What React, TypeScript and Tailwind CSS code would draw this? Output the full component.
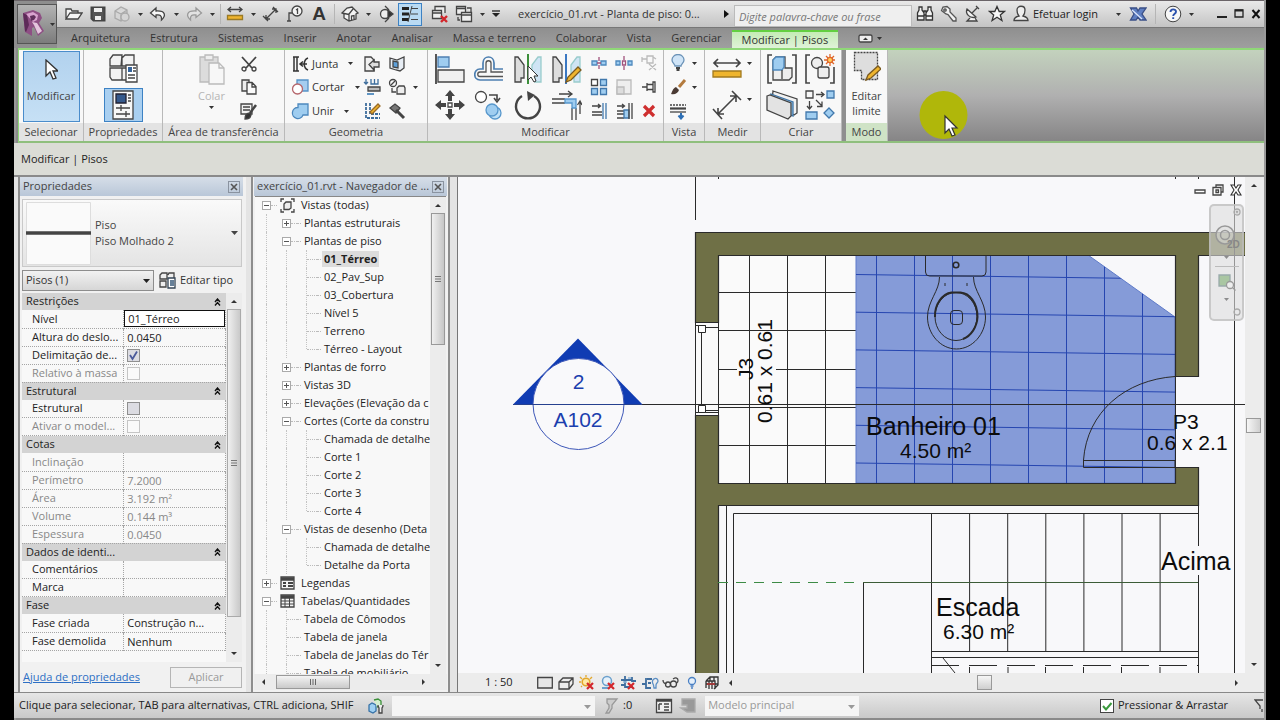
import React, { useState } from "react";

type Kids = { children?: React.ReactNode };

function Svg({ w = 18, h = 18, children }: Kids & { w?: number; h?: number }) {
  return (
    <svg width={w} height={h} viewBox={`0 0 ${w} ${h}`} fill="none" stroke="#444" strokeWidth="1.3" className="shrink-0" aria-hidden="true">
      {children}
    </svg>
  );
}

function Caret() {
  return (
    <svg width="5" height="3" viewBox="0 0 5 3" className="shrink-0" aria-hidden="true">
      <path d="M0 0h5L2.500 3z" fill="#333" />
    </svg>
  );
}

function CaretButton({ label }: { label: string }) {
  return (
    <button aria-label={label} className="flex h-6 w-3 shrink-0 items-center justify-center">
      <Caret />
    </button>
  );
}

function Tool({ label, active, children }: Kids & { label: string; active?: boolean }) {
  return (
    <button
      aria-label={label}
      className={
        active
          ? "flex h-[23px] w-6 shrink-0 items-center justify-center border border-[#3d82c4] bg-[#b9daf3]"
          : "flex h-6 w-6 shrink-0 items-center justify-center"
      }
    >
      {children}
    </button>
  );
}

function Cell({ label, children }: Kids & { label: string }) {
  return (
    <button aria-label={label} className="flex items-center justify-center">
      {children}
    </button>
  );
}

/* ---------- title bar ---------- */

function QuickAccess() {
  return (
    <div className="flex shrink-0 items-center pl-[5px]">
      <Tool label="Abrir">
        <Svg><path d="M1 14V4h5l1 2h6v2M1 14l4-6h12l-4 6z" fill="#f4f4f4" /></Svg>
      </Tool>
      <Tool label="Salvar">
        <Svg><path d="M2.500 2.500h13v13h-11l-2-2z" fill="#555" strokeWidth="2" /><path d="M5 3h8v4H5zM6 11h6v4H6z" fill="#eee" stroke="none" /></Svg>
      </Tool>
      <Tool label="Sincronizar">
        <Svg><g stroke="#aaa" fill="#d5d5d5"><path d="M2 6l6-4 6 3v8l-6 3-6-3zM2 6l6 3 6-4M8 9v7" /><circle cx="12" cy="12" r="4" /></g></Svg>
      </Tool>
      <CaretButton label="Opções de sincronização" />
      <Tool label="Desfazer">
        <Svg><path d="M7 3L1.500 8 7 12.500V10c4-.5 6 0 5.500 5C17 11 17 5.500 7 6z" fill="#f7f7f7" stroke="#444" /></Svg>
      </Tool>
      <CaretButton label="Histórico de desfazer" />
      <Tool label="Refazer">
        <Svg><path d="M11 3l5.500 5L11 12.500V10c-4-.5-6 0-5.500 5C1 11 1 5.500 11 6z" fill="#e2e2e2" stroke="#999" /></Svg>
      </Tool>
      <CaretButton label="Histórico de refazer" />
      <span className="mx-[2px] h-5 w-px bg-[#b5b5b5]" />
      <Tool label="Medir">
        <Svg><path d="M2 4.500h14M5 2L2 4.500 5 7M13 2l3 2.500L13 7" /><path d="M1.500 10.500h15v4h-15z" fill="#efb52e" stroke="#9a7a25" /></Svg>
      </Tool>
      <CaretButton label="Opções de medida" />
      <Tool label="Cota alinhada">
        <Svg><path d="M4 14L14 4M1 11l5 5M11 2l5 5M4 10v4h4M10 4h4v4" /></Svg>
      </Tool>
      <Tool label="Identificar por categoria">
        <Svg><circle cx="11" cy="6" r="5" fill="#f5f5f5" /><path d="M10 5l1.500-1v5M6 8H3v8M1 16h4" /></Svg>
      </Tool>
      <Tool label="Texto">
        <span className="font-['Liberation_Sans',sans-serif] text-[19px] leading-5 font-bold text-[#333]">A</span>
      </Tool>
      <span className="mx-[3px] h-5 w-px bg-[#b5b5b5]" />
      <Tool label="Vista 3D padrão">
        <Svg><path d="M1 8l5-5 5-1 6 6-2 1v5l-7 2-5-3V9zM8 16V9l4-5M1 8l7 1.500M10.500 15v-4l2.500-.5v4" fill="#f3f3f3" /></Svg>
      </Tool>
      <CaretButton label="Opções de vista 3D" />
      <Tool label="Corte">
        <Svg><circle cx="8" cy="9" r="4.500" fill="#eee" /><path d="M8 1l4 4M8 17l4-4" /><path d="M11 5l5 4-5 4z" fill="#333" /></Svg>
      </Tool>
      <Tool label="Linhas finas" active>
        <Svg><path d="M1 3.500h7M1 9h7M1 14.500h7" strokeWidth="3" stroke="#222" /><path d="M10 3.500h7M10 9h7M10 14.500h7M11 1L7 17" strokeWidth="1" /></Svg>
      </Tool>
      <span className="w-[6px]" />
      <Tool label="Fechar janelas ocultas">
        <Svg><path d="M4 5V1.500h10V8M1.500 5.500h9v8h-9zM2 8h8" fill="#eee" /><path d="M10 11l6 6M16 11l-6 6" stroke="#d3262b" strokeWidth="2.400" /></Svg>
      </Tool>
      <Tool label="Alternar janelas">
        <Svg><path d="M1.500 1.500h9v8h-9zM1.500 3.500h9M12 3h4v4" fill="#eee" /><path d="M6.500 7.500h10v9h-10zM6.500 10h10" fill="#eee" /><path d="M3 12v3h2" /></Svg>
      </Tool>
      <CaretButton label="Lista de janelas" />
      <button aria-label="Personalizar barra" className="flex h-6 w-4 items-center justify-center">
        <Svg w={8} h={8}><path d="M0 1h8" stroke="#222" /><path d="M0 3h8L4 7z" fill="#222" stroke="none" /></Svg>
      </button>
    </div>
  );
}

function TitleBar() {
  return (
    <div className="flex h-7 items-center border-t border-t-[#6a6468] border-b border-b-[#777] bg-linear-to-b from-[#e9e9e9] to-[#c4c4c4]">
      <QuickAccess />
      <h1 className="ml-[14px] w-[200px] shrink truncate text-[11px] text-[#333]">exercício_01.rvt - Planta de piso: 0...</h1>
      <button aria-label="Expandir pesquisa" className="flex h-6 w-4 shrink-0 items-center justify-center">
        <Svg w={5} h={8}><path d="M0 0l5 4-5 4z" fill="#111" stroke="none" /></Svg>
      </button>
      <input
        aria-label="Pesquisa"
        placeholder="Digite palavra-chave ou frase"
        className="mt-1 h-[22px] w-[178px] shrink-0 border border-[#bbb] bg-[#efefef] px-1 text-[11px] italic text-[#444] placeholder:text-[#777]"
      />
      <div className="flex min-w-0 flex-1 items-center pl-px">
        <Tool label="Pesquisar">
          <Svg><g fill="#f2f2f2" stroke="#333"><path d="M3 2h3v3l2 3v7H1.500V8L3 5zM12 2h3v3l1.500 3v7H10V8l2-3zM8 6h2v4H8zM1.500 11H8M10 11h6.500" /></g></Svg>
        </Tool>
        <Tool label="Assinatura">
          <Svg><path d="M6 9L1.500 5.500 3 2l4-.5 3 2.500v3l6 6v3h-3L8 9.500z" fill="#f2f2f2" stroke="#555" /><circle cx="5" cy="5" r="1.200" /></Svg>
        </Tool>
        <Tool label="Comunicação">
          <Svg><path d="M3 4c-2 5 3 10 9 8zM3 4l9 8M8 8l5-5M12 1l3 3M6 13l-3 3h10l-2-3" fill="#f2f2f2" stroke="#444" /></Svg>
        </Tool>
        <Tool label="Favoritos">
          <Svg><path d="M9 1.500l2.200 5h5.300l-4.200 3.500 1.600 5.500L9 12.300 4.100 15.500 5.700 10 1.500 6.500h5.300z" fill="#f7f7f7" stroke="#333" /></Svg>
        </Tool>
        <button className="flex h-6 shrink-0 items-center gap-[3px] pl-[3px] text-[11px] text-[#222]">
          <Svg><path d="M5 5c0-5 8-5 8 0 0 4-1 5-2 6 4 1 5 2 5 4.500H2C2 13 3 12 7 11 6 10 5 9 5 5z" fill="#eee" /></Svg>
          Efetuar login
        </button>
        <div className="ml-auto flex shrink-0 items-center">
          <CaretButton label="Opções de login" />
          <span className="w-[2px]" />
          <Tool label="Exchange Apps">
            <Svg><path d="M1.500 3h6L9 6l2-3h6l-4 6 4 6h-6L9 12l-2 3H1.500L5 9z" fill="#5f7fc2" stroke="#3a4f86" /><path d="M3 5l10 9" stroke="#dce6fa" /></Svg>
          </Tool>
          <span className="mx-[5px] h-5 w-px bg-[#b5b5b5]" />
          <Tool label="Ajuda">
            <svg width="18" height="18" viewBox="0 0 18 18" aria-hidden="true">
              <circle cx="9" cy="9" r="7.800" fill="#f7f7f7" stroke="#444" />
              <path d="M6.500 7c0-3.500 5.500-3.300 5.500-.3 0 2-2.800 2-2.800 4.300M9.200 12.200v1.800" fill="none" stroke="#2b51ae" strokeWidth="1.900" />
            </svg>
          </Tool>
          <CaretButton label="Opções de ajuda" />
          <span className="w-4" />
          <button aria-label="Minimizar" className="flex h-6 w-[17px] items-center justify-center"><Svg w={10} h={10}><path d="M0 8h10" stroke="#222" strokeWidth="2" /></Svg></button>
          <button aria-label="Maximizar" className="flex h-6 w-[17px] items-center justify-center"><Svg w={10} h={10}><path d="M1 1h8v7H1z" stroke="#222" /><path d="M1 1.500h8" stroke="#222" strokeWidth="2" /></Svg></button>
          <button aria-label="Fechar" className="flex h-6 w-[17px] items-center justify-center"><Svg w={10} h={10}><path d="M1.500 1l7 8M8.500 1l-7 8" stroke="#111" strokeWidth="2" /></Svg></button>
        </div>
      </div>
    </div>
  );
}

const TABS = ["Arquitetura", "Estrutura", "Sistemas", "Inserir", "Anotar", "Analisar", "Massa e terreno", "Colaborar", "Vista", "Gerenciar"];

function Header() {
  return (
    <header className="flex bg-[#9a9a9a]">
      <div className="flex w-[43px] shrink-0 flex-col border-t border-t-[#6a6468] bg-[#8e8e8e] pt-[3px] pl-[3px]">
        <button aria-label="Menu do aplicativo" className="flex h-10 w-10 items-center gap-1 border border-[#555] bg-linear-to-b from-[#b4b4b4] to-[#7c7c7c] pl-1">
          <Svg w={24} h={32}>
            <g stroke="none">
              <path d="M1 5l10-3 7 3 2 5-3 5 5 8-6 5-4-9-2 1v8l-7-4z" fill="#8e4f84" />
              <path d="M4 6l7-2 5 3-1 5-4 2z" fill="#d9a3cf" />
              <path d="M1 5l4 2 2 10-3 7-1-1z" fill="#5d2a58" />
              <path d="M10 14l5 1 5 8-4 3-4-9z" fill="#e4c5dd" />
              <path d="M8 8l4-1 2 2-2 3-3 1z" fill="#61305c" />
            </g>
          </Svg>
          <Caret />
        </button>
      </div>
      <div className="min-w-0 flex-1">
        <TitleBar />
        <nav className="flex h-5 items-end bg-linear-to-b from-[#8f8f8f] to-[#9f9f9f] pl-1 text-[11px] text-[#333]">
          {TABS.map((t) => (
            <a key={t} href="#" className="flex h-5 items-center px-[10px] whitespace-nowrap">{t}</a>
          ))}
          <a href="#" aria-current="page" className="flex h-[18px] items-center border-t-2 border-[#63cf41] bg-linear-to-b from-[#c4ecb5] to-[#e0f2d8] px-[10px] whitespace-nowrap">
            Modificar | Pisos
          </a>
          <button aria-label="Minimizar faixa de opções" className="ml-5 flex h-5 items-center gap-1">
            <Svg w={15} h={9}><rect x="1" y="1" width="13" height="7" rx="1.500" fill="#eee" /><path d="M5 6h5L7.500 3.500z" fill="#333" stroke="none" /></Svg>
            <Caret />
          </button>
        </nav>
      </div>
    </header>
  );
}

/* ---------- ribbon ---------- */

function Panel({ title, size, green, children }: Kids & { title: string; size: string; green?: boolean }) {
  return (
    <section className={`flex shrink-0 flex-col border-r border-r-[#b9b9b9] bg-[#f8f8f8] ${size}`}>
      <div className="flex h-[73px] justify-center">{children}</div>
      <h2 className={`h-[18px] truncate text-center text-[11px] leading-[18px] text-[#444] ${green ? "bg-[#cfe3c6]" : "bg-[#e3e3e3]"}`}>{title}</h2>
    </section>
  );
}

function GeoRow({ label, children }: Kids & { label: string }) {
  return (
    <button className="flex items-center gap-[3px] text-[11px] text-[#333]">
      {children}
      {label}
      <span className="w-1" />
      <Caret />
    </button>
  );
}

const BLUE = "#9fcdf0";

function Ribbon() {
  return (
    <div className="ml-[4px] flex h-[95px] border-y-2 border-t-[#8fd877] border-b-[#8fbf7d] border-l border-l-[#8fd877] bg-linear-to-b from-[#c3d2bd] via-[#b0b0b0] to-[#868586]">
      <Panel title="Selecionar" size="w-[65px]">
        <button className="mt-px flex h-[71px] w-[57px] flex-col items-center gap-[7px] border border-[#4a8ccb] bg-linear-to-b from-[#b2d2ee] to-[#c6e0f5] pt-[7px] text-[11px] text-[#444]">
          <Svg w={14} h={22}><path d="M2 1v16l4-4 3 7 3-1-3-7h5z" fill="#fff" stroke="#333" /></Svg>
          Modificar
        </button>
      </Panel>
      <Panel title="Propriedades" size="w-[79px]">
        <div className="flex flex-col items-center gap-1 pt-[3px]">
          <Cell label="Propriedades de tipo">
            <Svg w={30} h={31}>
              <path d="M2 6l3-4h9l-1 11H2zM14 5l3-3h9v11H14zM2 15h12v12H4l-2-3zM14 15h5v12h-5" fill="#f2f2f2" />
              <path d="M18 12h11v17H18z" fill="#fff" /><path d="M20 14h4v5h-4z" fill="#35649b" stroke="none" /><path d="M25 15h3M25 18h3M20 22h7M20 25h7" />
            </Svg>
          </Cell>
          <button aria-label="Propriedades" className="flex h-[34px] w-[39px] items-center justify-center border border-[#3d82c4] bg-[#a9cff0]">
            <Svg w={22} h={30}>
              <path d="M1 1h20v28H1z" fill="#f7f7f7" /><path d="M4 4h10v9H4z" fill="#35598c" stroke="#223" /><path d="M16 5h3M16 8h3M16 11h3M4 18h14M9 15v6M4 24h14M14 21v6" />
            </Svg>
          </button>
        </div>
      </Panel>
      <Panel title="Área de transferência" size="w-[122px]">
        <div className="flex w-full">
          <button className="flex w-[73px] flex-col items-center pl-6 pt-[3px] text-[11px] leading-4 text-[#b5b5b5]">
            <Svg w={26} h={32}>
              <g stroke="#bbb"><path d="M1 4h18v25H1z" fill="#dcdcdc" /><path d="M6 2h8v5H6z" fill="#eee" /><path d="M10 10h10l5 5v16H10z" fill="#f7f7f7" /><path d="M20 10v5h5" /></g>
            </Svg>
            <span className="pt-[3px]">Colar</span>
            <span className="pt-[2px]"><Caret /></span>
          </button>
          <div className="grid flex-1 grid-rows-3 pt-[2px] pr-[23px]">
            <Cell label="Recortar"><Svg><path d="M2 2l10 11M16 2L6 13" strokeWidth="1.800" /><circle cx="4" cy="14" r="2" /><circle cx="14" cy="14" r="2" /></Svg></Cell>
            <Cell label="Copiar"><Svg><path d="M2 2h7v11H2z" fill="#eee" /><path d="M7 4.500h5l4 4V16H7zM12 5v4h4" fill="#fafafa" /></Svg></Cell>
            <Cell label="Corresponder propriedades"><Svg><path d="M1 2h11v10H1z" fill="#f2f2f2" /><path d="M3 5h7M3 8h7" /><path d="M16 3l-6 8" strokeWidth="2.500" /><path d="M5 17c0-5 3-6 5-6l1 2c-1 4-3 4-6 4z" fill="#333" /></Svg></Cell>
          </div>
        </div>
      </Panel>
      <Panel title="Geometria" size="w-[143px]">
        <div className="grid flex-1 grid-rows-3 justify-items-start pt-[2px] pl-[6px]">
          <GeoRow label="Junta"><Svg><path d="M2 2h6M2 16h6M3 2v14M6 2c0 5 0 9 0 14M17 3c-5 2-5 10 0 12M9 9h7M12 6.500L9 9l3 2.500" stroke="#333" strokeWidth="1.500" /></Svg></GeoRow>
          <GeoRow label="Cortar"><Svg><path d="M6 2h11v11H6z" fill="#a5cdf0" stroke="#5792c6" /><circle cx="6.500" cy="11" r="5" fill="#fff" stroke="#b5656b" /></Svg></GeoRow>
          <GeoRow label="Unir"><Svg><path d="M7 2h10v11h-5a5.500 5.500 0 1 1-5-7.500z" fill={BLUE} stroke="#4d88bd" /></Svg></GeoRow>
        </div>
        <div className="grid w-[69px] grid-cols-[25px_25px_12px] grid-rows-3 pt-[2px]">
          <Cell label="Encaixe"><Svg><path d="M2 2h6l3 3v11H2z" fill="#f0f0f0" /><path d="M16 7v5h-5v3L6 9.500 11 5v2z" fill="#ddd" /></Svg></Cell>
          <Cell label="Dividir face"><Svg><path d="M2 3l7 2 7-3v11l-4 3-4-1-6-2z" fill="#e7edf4" /><path d="M5 6l5 1v6l-5-1z" fill="#5da0da" /></Svg></Cell>
          <span />
          <Cell label="Juntar vigas"><Svg><path d="M3 1v5M1 4l2 2 2-2M8 1v5h7V1M11.500 1v5" stroke="#3d6d9c" /><path d="M5 9h12v4H5z" fill="#bbb" /><path d="M4 16h7" stroke="#4d88bd" strokeWidth="1.800" /></Svg></Cell>
          <Cell label="Pintar"><Svg><circle cx="5" cy="5" r="3.500" /><path d="M3 7l4-4M4 10v4h4M11 8h5l1 2v6h-8v-6z" fill="#eee" /></Svg></Cell>
          <CaretButton label="Opções de pintura" />
          <Cell label="Junções de parede"><Svg><path d="M3 1v15h14M7 1v11h10" stroke="#3d6d9c" strokeDasharray="3 1" strokeWidth="1.800" /><path d="M7 10L15 2l2 2-8 8z" fill="#efb52e" stroke="#9a6a25" /></Svg></Cell>
          <Cell label="Demolir"><Svg><path d="M2 6l5-4 5 4-4 5z" fill="#777" /><path d="M8 8l8 8" strokeWidth="3" /></Svg></Cell>
          <span />
        </div>
      </Panel>
      <Panel title="Modificar" size="w-[236px]">
        <div className="grid grid-cols-[39px_39px_39px_39px] grid-rows-[36px_36px] pt-px">
          <Cell label="Alinhar"><Svg w={30} h={30}><path d="M1 0v30" stroke="#444" strokeWidth="1.800" /><path d="M3 3h11v10H3z" fill={BLUE} stroke="#4d7fb1" /><path d="M3 16h26v12H3z" fill="#f0f0f0" /></Svg></Cell>
          <Cell label="Deslocamento"><Svg w={30} h={30}><path d="M29 15h-9V9c0-8-11-8-11 0v6H6c-7 0-7 11 0 11h23" stroke="#4d7fb1" strokeWidth="1.700" /><path d="M29 18H17V9c0-3-5-3-5 0v9H6c-3 0-3 4.500 0 4.500h23" stroke="#555" /></Svg></Cell>
          <Cell label="Espelhar - Selecionar eixo"><Svg w={30} h={30}><path d="M2 3h3l6 8v13H8v4H2z" fill="#ddd" /><path d="M28 3h-3l-6 8v13h3v4h6z" fill="#cfe4f4" stroke="#9cc" /><path d="M15 0v30" stroke="#3c8f3b" strokeWidth="2" /><path d="M15 12v14l3-3 3 5 2-1-2-5h4z" fill="#fff" stroke="#333" strokeWidth="1" /></Svg></Cell>
          <Cell label="Espelhar - Desenhar eixo"><Svg w={30} h={30}><path d="M1 3h3l6 8v13H7v4H1z" fill="#ddd" /><path d="M28 3h-3l-6 8v13h3v4h6z" fill="#cfe4f4" stroke="#9cc" /><path d="M14 0v30" stroke="#3b78c2" strokeWidth="2" /><path d="M14 28l2-5L26 13l3 3-10 10z" fill="#efb52e" stroke="#7a5a20" /></Svg></Cell>
          <Cell label="Mover"><Svg w={30} h={30}><path d="M15 0l5 6h-3v5h-4V6h-3zM15 30l5-6h-3v-5h-4v5h-3zM0 15l6-5v3h5v4H6v3zM30 15l-6-5v3h-5v4h5v3z" fill="#444" stroke="none" /><path d="M13 13h4v4h-4z" fill="#fff" /></Svg></Cell>
          <Cell label="Copiar elementos"><Svg w={30} h={30}><circle cx="7" cy="7" r="5.500" fill="#fff" /><circle cx="21" cy="23" r="6" fill="#bfe0f7" stroke="#5797cc" /><circle cx="18" cy="20" r="6" fill={BLUE} stroke="#5797cc" /><path d="M15 5h8v5M20 8l3 4 3-4" strokeWidth="1.600" /></Svg></Cell>
          <Cell label="Rotacionar"><Svg w={30} h={30}><path d="M9 6a12 12 0 1 0 12 0" strokeWidth="2.400" /><path d="M14 1l8 4-7 6z" fill="#444" stroke="none" /></Svg></Cell>
          <Cell label="Aparar/Estender canto"><Svg w={30} h={30}><path d="M0 9h13M0 13h13M20 18v12M24 18v12" /><path d="M13 9h11v9h-4v-5h-7z" fill={BLUE} stroke="#5797cc" /><path d="M7 4h12M16 1l4 3-4 3M28 24V12M25.500 15L28 11l2 4" /></Svg></Cell>
        </div>
        <div className="grid grid-cols-[25px_25px_25px] grid-rows-[24px_24px_24px] pt-px">
          <Cell label="Dividir elemento"><Svg><path d="M2 7h5v4H2zM11 7h5v4h-5z" fill={BLUE} stroke="#4d88bd" /><path d="M9 3v4M9 11v4M7 9h4" stroke="#a0527c" /></Svg></Cell>
          <Cell label="Dividir com folga"><Svg><path d="M1 7h4v4H1zM13 7h4v4h-4z" fill={BLUE} stroke="#4d88bd" /><path d="M7.500 7h3v4h-3z" stroke="#a0527c" /><path d="M9 2v4M9 12v4" stroke="#a0527c" /></Svg></Cell>
          <Cell label="Desafixar"><Svg><g stroke="#bbb"><path d="M2 3v5M2 5h5M7 2v7h6V2zM13 3l3 2M9 10l7 6M16 10l-7 6" /></g></Svg></Cell>
          <Cell label="Matriz"><Svg><path d="M1.500 1.500h6v6h-6z" fill="#fff" /><path d="M10.500 1.500h6v6h-6zM1.500 10.500h6v6h-6zM10.500 10.500h6v6h-6z" fill={BLUE} stroke="#4178ac" /></Svg></Cell>
          <Cell label="Escala"><Svg><g stroke="#bbb"><path d="M2 2h14v14H2z" fill="#eee" /><path d="M2 9h7v7H2z" fill="#ddd" /></g></Svg></Cell>
          <Cell label="Fixar"><Svg><path d="M2 9h5M7 5v8M7 6.500h6v5H7M13 4v10h2V4z" /></Svg></Cell>
          <Cell label="Aparar/Estender único"><Svg><path d="M2 4h8M8 2l2.500 2L8 6M2 10h10M2 13h10" /><path d="M13 1v16M16 1v16" stroke="#4178ac" /></Svg></Cell>
          <Cell label="Aparar/Estender múltiplo"><Svg><path d="M2 4h7M7 2l2.500 2L7 6M2 9h7M2 12h7M2 16h7" /><path d="M9 8h5v8H9z" fill={BLUE} stroke="#4178ac" /><path d="M14 1v16M17 1v16" /></Svg></Cell>
          <Cell label="Excluir"><Svg w={14} h={14}><path d="M2 2l10 10M12 2L2 12" stroke="#cf2f2f" strokeWidth="3.200" /></Svg></Cell>
        </div>
      </Panel>
      <Panel title="Vista" size="w-[41px]">
        <div className="grid grid-cols-[20px_12px] grid-rows-[24px_24px_24px] pt-px">
          <Cell label="Ocultar na vista"><Svg><path d="M6 12c0-2-3-3-3-6a6 5.500 0 0 1 12 0c0 3-3 4-3 6z" fill="#cfe4f7" stroke="#6b93b8" /><path d="M7 14h4M7.500 16h3" strokeWidth="1.800" /></Svg></Cell>
          <CaretButton label="Opções de ocultar" />
          <Cell label="Sobrepor gráficos"><Svg><path d="M16 2l-6 7" stroke="#b37a3e" strokeWidth="3" /><path d="M2 16c1-1 1-5 5-7l3 3c-1 3-4 5-8 4z" fill="#4a3a33" stroke="none" /></Svg></Cell>
          <CaretButton label="Opções de gráficos" />
          <Cell label="Exibição de linha"><Svg><path d="M1 3h16" strokeDasharray="2 1" /><path d="M1 6.500h16" strokeWidth="2.200" /><path d="M1 10h16" /><path d="M12 11v5M9.500 13.500l2.500 3 2.500-3" stroke="#2d6fb5" strokeWidth="2" /></Svg></Cell>
          <span />
        </div>
      </Panel>
      <Panel title="Medir" size="w-[56px]">
        <div className="grid grid-cols-[34px_14px] grid-rows-[36px_36px] pt-px pl-[2px]">
          <Cell label="Medir distância"><Svg w={30} h={22}><path d="M2 5h26M6 1L2 5l4 4M24 1l4 4-4 4" strokeWidth="1.700" /><path d="M1 13h28v6H1z" fill="#efb52e" stroke="#a17a1f" /></Svg></Cell>
          <CaretButton label="Opções de medir" />
          <Cell label="Cota"><Svg w={30} h={30}><path d="M6 24L24 6M1 19l9 10M20 1l9 9M6 18v6h6M18 6h6v6" strokeWidth="1.600" /></Svg></Cell>
          <CaretButton label="Opções de cota" />
        </div>
      </Panel>
      <Panel title="Criar" size="w-[81px]">
        <div className="grid grid-cols-[38px_38px] grid-rows-[36px_36px] pt-px">
          <Cell label="Criar montagem"><Svg w={30} h={30}><path d="M5 1H1v28h4M25 1h4v28h-4" strokeWidth="1.600" /><path d="M6 6l3-3h9v11h7v9l-3 3H6z" fill="#eee" /><path d="M6 6l3-3h8v10l-2 3H6z" fill={BLUE} stroke="#4d88bd" /><path d="M15 16v9" /></Svg></Cell>
          <Cell label="Criar grupo"><Svg w={30} h={30}><path d="M5 1H1v28h4M25 29h4V13" strokeWidth="1.600" /><circle cx="12" cy="9" r="5.500" fill="#eee" /><rect x="13" y="13" width="11" height="11" rx="2" fill="#eee" /><path d="M25 0v12M19 6h11M21 2l8 8M29 2l-8 8" stroke="#e0662a" strokeWidth="1.300" /><circle cx="25" cy="6" r="2.600" fill="#ffd25e" stroke="#e0662a" strokeWidth="1.300" /></Svg></Cell>
          <Cell label="Criar peças"><Svg w={32} h={30}><path d="M7 1l24 8v14l-3 2L6 12z" fill="#f2f2f2" /><path d="M5 4l22 8v14l-22-9z" fill={BLUE} stroke="#3f74a6" /><path d="M1 6l3-1 21 8v13l-3 3L1 20z" fill="#e3e3e3" /></Svg></Cell>
          <Cell label="Criar similar"><Svg w={30} h={30}><path d="M1 1h7v7H1z" /><path d="M22 1h7v7h-7zM1 22h11v7H1zM24 18l5 5-5 5-5-5z" fill={BLUE} stroke="#4178ac" /><path d="M11 4.500h8M16 2l3 2.500L16 7M4.500 11v8M2 16l2.500 3L7 16M11 10l6 6M17 11.500v5h-5" /></Svg></Cell>
        </div>
      </Panel>
      <div className="w-1 shrink-0 bg-[#8f8f8f]" />
      <Panel title="Modo" size="w-[42px]" green>
        <button className="flex flex-col items-center pt-px text-[11px] leading-[15px] text-[#444]">
          <Svg w={28} h={32}><path d="M1.500 1.500h23v27h-16v-9h-7z" fill="#dedede" strokeDasharray="2 1" /><path d="M13 29l2-5L25 15l3 3-10 9z" fill="#efb52e" stroke="#7a5a20" /></Svg>
          <span className="pt-[5px]">Editar</span>
          <span>limite</span>
        </button>
      </Panel>
    </div>
  );
}

/* ---------- properties palette ---------- */

type Prop = { name: string; value?: string; check?: boolean; off?: boolean; focus?: boolean };
const GROUPS: { title: string; rows: Prop[] }[] = [
  {
    title: "Restrições",
    rows: [
      { name: "Nível", value: "01_Térreo", focus: true },
      { name: "Altura do deslo...", value: "0.0450" },
      { name: "Delimitação de...", check: true },
      { name: "Relativo à massa", check: false, off: true },
    ],
  },
  { title: "Estrutural", rows: [{ name: "Estrutural", check: false }, { name: "Ativar o model...", check: false, off: true }] },
  {
    title: "Cotas",
    rows: [
      { name: "Inclinação", value: "", off: true },
      { name: "Perímetro", value: "7.2000", off: true },
      { name: "Área", value: "3.192 m²", off: true },
      { name: "Volume", value: "0.144 m³", off: true },
      { name: "Espessura", value: "0.0450", off: true },
    ],
  },
  { title: "Dados de identi...", rows: [{ name: "Comentários", value: "" }, { name: "Marca", value: "" }] },
  { title: "Fase", rows: [{ name: "Fase criada", value: "Construção n..." }, { name: "Fase demolida", value: "Nenhum" }] },
];

function PropCheck({ id, initial, off }: { id: string; initial: boolean; off?: boolean }) {
  const [on, setOn] = useState(initial);
  return (
    <span className="relative ml-[3px] block h-[13px] w-[13px]">
      <input
        id={id}
        type="checkbox"
        checked={on}
        disabled={off}
        onChange={() => setOn(!on)}
        className={`block h-[13px] w-[13px] appearance-none border ${off ? "border-[#c5c5c5] bg-[#fafafa]" : "border-[#8f8f8f] bg-[#dcdce2]"}`}
      />
      {on && (
        <svg width="13" height="13" viewBox="0 0 13 13" className="pointer-events-none absolute inset-0" aria-hidden="true">
          <path d="M3 6l2.500 4L10 2.500" fill="none" stroke="#4b5a9b" strokeWidth="1.800" />
        </svg>
      )}
    </span>
  );
}

function PaneTitle({ children }: Kids) {
  return (
    <div className="flex h-[19px] shrink-0 items-center justify-between bg-linear-to-b from-[#d6dee8] to-[#b9c7d8] px-[3px] text-[11px] text-[#444]">
      <h2 className="whitespace-nowrap">{children}</h2>
      <button aria-label="Fechar painel" className="flex h-3 w-3 shrink-0 items-center justify-center border border-[#8a93a0]">
        <Svg w={8} h={8}><path d="M1 1l6 6M7 1L1 7" stroke="#555" strokeWidth="1.600" /></Svg>
      </button>
    </div>
  );
}

function ScrollArrow({ dir }: { dir: "up" | "down" | "left" | "right" }) {
  const d = { up: "M1 6h6L4 3z", down: "M1 2h6L4 5z", left: "M5 1v6L2 4z", right: "M3 1v6l3-3z" }[dir];
  const label = { up: "Rolar para cima", down: "Rolar para baixo", left: "Rolar para a esquerda", right: "Rolar para a direita" }[dir];
  return (
    <button aria-label={label} className="flex h-4 w-4 shrink-0 items-center justify-center">
      <Svg w={8} h={8}><path d={d} fill="#333" stroke="none" /></Svg>
    </button>
  );
}

function Grip() {
  return <Svg w={8} h={8}><path d="M1 1.500h6M1 4h6M1 6.500h6" stroke="#777" strokeWidth="1" /></Svg>;
}

function Properties() {
  return (
    <aside className="flex w-[228px] shrink-0 flex-col border-l-2 border-l-[#8d8d8d] bg-[#f1f1f1] pr-[3px]">
      <PaneTitle>Propriedades</PaneTitle>
      <div className="flex min-h-0 flex-1 flex-col pl-[2px] pr-px">
        <button className="mt-[3px] flex h-[68px] items-center border border-[#c9c9c9] bg-linear-to-b from-[#fafafa] to-[#e4e4e4] px-[3px] text-left text-[11px] leading-4 text-[#444]">
          <svg width="65" height="63" viewBox="0 0 65 63" className="mr-1 shrink-0" aria-hidden="true">
            <path d="M.5.5h64v62H.5z" fill="#fafafa" stroke="#ddd" />
            <path d="M0 31h65" stroke="#444" strokeWidth="3.500" />
          </svg>
          <span className="flex-1">Piso<br />Piso Molhado 2</span>
          <svg width="7" height="4" viewBox="0 0 7 4" aria-hidden="true"><path d="M0 0h7L3.500 4z" fill="#444" /></svg>
        </button>
        <div className="flex h-[26px] items-center">
          <div className="relative">
            <select aria-label="Filtro de propriedades" className="block h-[21px] w-[132px] appearance-none border border-[#8d8d8d] bg-linear-to-b from-[#f2f2f2] to-[#d6d6d6] px-[3px] text-[11px] text-[#333]">
              <option>Pisos (1)</option>
            </select>
            <svg width="7" height="4" viewBox="0 0 7 4" className="pointer-events-none absolute top-[9px] right-1" aria-hidden="true"><path d="M0 0h7L3.500 4z" fill="#222" /></svg>
          </div>
          <button className="flex flex-1 items-center gap-1 pl-[5px] text-[11px] whitespace-nowrap text-[#333]">
            <Svg w={17} h={17}><path d="M1 3l2-2h5v6H1zM9 3l1-2h5v6M1 9h6v6H1z" fill="#eee" /><path d="M9 6h7v10H9z" fill="#fff" stroke="#345" /><path d="M11 9h4M11 11h4M11 13h4" stroke="#357" /></Svg>
            Editar tipo
          </button>
        </div>
        <div className="flex min-h-0 flex-1 bg-[#f8f8f8]">
          <div className="min-w-0 flex-1">
            <table className="w-full table-fixed border-collapse text-left text-[11px] text-[#222]">
              <colgroup><col className="w-1/2" /><col className="w-1/2" /></colgroup>
              {GROUPS.map((g) => (
                <tbody key={g.title}>
                  <tr className="h-[17px] bg-[#d3d3d3]">
                    <th colSpan={2} scope="rowgroup" className="p-0 pl-1 font-normal">
                      <span className="flex h-[17px] items-center justify-between pr-[5px]">
                        {g.title}
                        <Svg w={7} h={8}><path d="M1 4l2.500-3L6 4M1 7.500l2.500-3 2.500 3" stroke="#111" strokeWidth="1.400" /></Svg>
                      </span>
                    </th>
                  </tr>
                  {g.rows.map((r) => {
                    const id = `${g.title}-${r.name}`.replace(/\W/g, "");
                    return (
                      <tr key={r.name} className={`h-[18px] border-b border-dotted border-[#a5a5a5] ${r.off ? "text-[#888]" : ""}`}>
                        <th scope="row" className="border-r border-dotted border-[#a5a5a5] p-0 pl-[10px] font-normal whitespace-nowrap">
                          <label htmlFor={id}>{r.name}</label>
                        </th>
                        <td className="border-r border-dotted border-[#a5a5a5] p-0">
                          {r.check !== undefined ? (
                            <PropCheck id={id} initial={r.check} off={r.off} />
                          ) : (
                            <input
                              id={id}
                              type="text"
                              defaultValue={r.value}
                              disabled={r.off}
                              className={`block h-[17px] w-full px-[3px] text-[11px] ${r.focus ? "border border-[#111] bg-white" : "bg-transparent"}`}
                            />
                          )}
                        </td>
                      </tr>
                    );
                  })}
                </tbody>
              ))}
            </table>
          </div>
          <div className="flex w-4 shrink-0 flex-col items-center bg-[#ececec]">
            <ScrollArrow dir="up" />
            <div className="flex w-[14px] flex-[5] items-center justify-center border border-[#aaa] bg-linear-to-r from-[#f0f0f0] to-[#c9c9c9]"><Grip /></div>
            <div className="h-[29px]" />
            <ScrollArrow dir="down" />
          </div>
        </div>
        <div className="flex h-[30px] items-center justify-between">
          <a href="#" className="pl-px text-[11px] text-[#2d6fc4] underline">Ajuda de propriedades</a>
          <button disabled className="h-[21px] w-[72px] border border-[#b5b5b5] bg-[#f0f0f0] text-[11px] text-[#999]">Aplicar</button>
        </div>
      </div>
    </aside>
  );
}

/* ---------- project browser ---------- */

type Node = { text: string; level: number; box?: "+" | "-"; icon?: "view" | "legend" | "table"; on?: boolean; last?: boolean };
const TREE: Node[] = [
  { text: "Vistas (todas)", level: 0, box: "-", icon: "view" },
  { text: "Plantas estruturais", level: 1, box: "+" },
  { text: "Plantas de piso", level: 1, box: "-" },
  { text: "01_Térreo", level: 2, on: true },
  { text: "02_Pav_Sup", level: 2 },
  { text: "03_Cobertura", level: 2 },
  { text: "Nível 5", level: 2 },
  { text: "Terreno", level: 2 },
  { text: "Térreo - Layout", level: 2, last: true },
  { text: "Plantas de forro", level: 1, box: "+" },
  { text: "Vistas 3D", level: 1, box: "+" },
  { text: "Elevações (Elevação da c", level: 1, box: "+" },
  { text: "Cortes (Corte da constru", level: 1, box: "-" },
  { text: "Chamada de detalhe", level: 2 },
  { text: "Corte 1", level: 2 },
  { text: "Corte 2", level: 2 },
  { text: "Corte 3", level: 2 },
  { text: "Corte 4", level: 2, last: true },
  { text: "Vistas de desenho (Deta", level: 1, box: "-", last: true },
  { text: "Chamada de detalhe", level: 2 },
  { text: "Detalhe da Porta", level: 2, last: true },
  { text: "Legendas", level: 0, box: "+", icon: "legend" },
  { text: "Tabelas/Quantidades", level: 0, box: "-", icon: "table" },
  { text: "Tabela de Cômodos", level: 1 },
  { text: "Tabela de janela", level: 1 },
  { text: "Tabela de Janelas do Tér", level: 1 },
  { text: "Tabela de mobiliário", level: 1 },
];

function TreeIcon({ kind }: { kind: "view" | "legend" | "table" }) {
  if (kind === "view")
    return <Svg w={15} h={15}><path d="M4 1H1v3M11 1h3v3M4 14H1v-3M11 14h3v-3" /><path d="M4 6l2-2h5v6l-2 1.500H4z" fill="#eee" /></Svg>;
  return (
    <Svg w={15} h={14}>
      <path d="M1 1h13v12H1z" fill="#f4f4f4" /><path d="M1 3h13" strokeWidth="3.500" />
      {kind === "legend" ? <path d="M3 7h3M3 10h3M8 7h5M8 10h5" strokeWidth="2" /> : <path d="M1 7h13M1 10h13M5 4v9M9.500 4v9" strokeWidth="1" />}
    </Svg>
  );
}

function TreeRow({ node }: { node: Node }) {
  const cells = Array.from({ length: node.level + 1 }, (_, i) => i);
  return (
    <li className="flex h-[18px] items-center text-[11px] whitespace-nowrap text-[#222]">
      {cells.map((i) => {
        const own = i === node.level;
        return (
          <span key={i} className="flex h-[18px] w-5 shrink-0 items-center">
            {own && node.box ? (
              <>
                <button aria-label={`${node.box === "+" ? "Expandir" : "Recolher"} ${node.text}`} className="ml-[5px] flex h-[9px] w-[9px] shrink-0 items-center justify-center border border-[#aaa] bg-white">
                  <Svg w={5} h={5}><path d={node.box === "+" ? "M0 2.500h5M2.500 0v5" : "M0 2.500h5"} stroke="#555" strokeWidth="1" /></Svg>
                </button>
                <span className="w-[6px] border-t border-dotted border-[#bbb]" />
              </>
            ) : (
              <>
                <span className={`w-[10px] self-start border-r border-dotted border-[#c4c4c4] ${own && node.last ? "h-[9px]" : "h-[18px]"}`} />
                {own && <span className="w-[10px] border-t border-dotted border-[#bbb]" />}
              </>
            )}
          </span>
        );
      })}
      {node.icon ? (
        <span className="mr-[6px] ml-[3px] flex shrink-0"><TreeIcon kind={node.icon} /></span>
      ) : (
        <span className="mr-[3px] w-1 shrink-0 border-t border-dotted border-[#bbb]" />
      )}
      <a href="#" className={node.on ? "-mx-[2px] bg-[#dcdcdc] px-[2px] font-bold" : ""}>{node.text}</a>
    </li>
  );
}

function Browser() {
  return (
    <aside className="ml-[5px] flex w-[199px] shrink-0 flex-col border-x-2 border-x-[#8d8d8d] bg-[#f1f1f1] px-px">
      <PaneTitle>exercício_01.rvt - Navegador de ...</PaneTitle>
      <div className="mx-px flex min-h-0 flex-1 border-t border-t-[#888] bg-[#f8f8f8]">
        <ul className="-mt-px min-w-0 flex-1 overflow-hidden pl-[2px]">
          {TREE.map((n, i) => <TreeRow key={i} node={n} />)}
        </ul>
        <div className="flex w-4 shrink-0 flex-col items-center bg-[#ececec]">
          <ScrollArrow dir="up" />
          <div className="flex h-[132px] w-[14px] items-center justify-center border border-[#999] bg-linear-to-r from-[#f0f0f0] to-[#c6c6c6]"><Grip /></div>
          <div className="flex-1" />
          <ScrollArrow dir="down" />
        </div>
      </div>
      <div className="flex h-4 shrink-0 items-center bg-[#ececec] pr-4 pl-[2px]">
        <ScrollArrow dir="left" />
        <div className="ml-1 flex h-[14px] w-[74px] items-center justify-center border border-[#999] bg-linear-to-b from-[#f4f4f4] to-[#cacaca]">
          <Svg w={8} h={8}><path d="M1.500 1v6M4 1v6M6.500 1v6" stroke="#666" strokeWidth="1" /></Svg>
        </div>
        <div className="flex-1" />
        <ScrollArrow dir="right" />
      </div>
      <div className="h-[2px] shrink-0" />
    </aside>
  );
}

/* ---------- drawing area ---------- */

const OLIVE = "#6f7046";
const range = (n: number) => Array.from({ length: n }, (_, i) => i);

function FloorPlan() {
  return (
    <svg className="block h-full w-full" role="img" aria-label="Planta de piso 01_Térreo">
      <g transform="translate(-458 -177)" fill="none" stroke="#2a2a2a" strokeWidth="1">
        <path d="M695.500 177V220M718.500 177v2M1175.500 177v2M1198.500 177v2" />
        <path d="M718 255H856V483H718z" fill="#fafafa" stroke="none" />
        <path d="M749.500 255V483M787.500 255V483M825.500 255V483M718 292.500H856M718 330.500H856M776 369.500H856M718 369.500H737M718 407.500H856M718 445.500H856" />
        <path d="M856 255H1088L1175 317V483H856z" fill="#859bd8" stroke="#5f7bc9" />
        <clipPath id="slab"><path d="M856 255H1088L1175 317V483H856z" /></clipPath>
        <g clipPath="url(#slab)" stroke="#2646b0">
          {range(8).map((i) => <path key={i} d={`M${876.5 + i * 38} 255V483`} />)}
          {range(6).map((i) => <path key={i} d={`M856 ${274.5 + i * 37.7}L1175 ${279 + i * 37.7}`} />)}
        </g>

        <g fill={OLIVE} stroke="none">
          <path d="M696 232H1260V255H1198V376H1175V255H718V322H696z" />
          <path d="M696 415H718V483H1175V467H1198V505H718V700H696z" />
        </g>
        <path d="M1260 232.500H695.500V322.500H718.500V255.500H1175.500V376.500H1198.500V255.500H1260M695.500 700V415.500H718.500V483.500H1175.500V467.500H1198.500V505.500H718.500V700" strokeWidth="1.200" />

        <path d="M696 323H718V415H696z" fill="#fafafa" stroke="none" />
        <path d="M695.500 322V415M718.500 322V415M696 322.500H718M696 325.500H706M706 327.500H718M701.500 333V406M706 410.500H718M696 412.500H718M696 415.500H718" />
        <path d="M698.500 325.500h7v7h-7zM698.500 405.500h7v7h-7z" fill="#fff" />

        <path d="M925.500 255V272q0 4 4 4H982q4 0 4-4V255" />
        <circle cx="956" cy="265" r="2.800" strokeWidth="1.600" />
        <path d="M939.500 277c0 14-12 24-12 40 0 17 13 32 29 32s29-15 29-32c0-16-12-26-12-40" />
        <ellipse cx="956" cy="316.500" rx="21" ry="24" />
        <path d="M963 339c8-3 14-12 14.500-22 0-14-8-24-17-24.500h-9c-9 1-17 12-16.500 24.500" strokeWidth="2" />
        <rect x="950.500" y="310.500" width="12" height="14" rx="3.500" />
        <path d="M945 283v3M967 283v3" />

        <path d="M1175 376.500C1125 380 1087 412 1083.500 460V467.500H1175V460.500H1084M1175.500 376V467" />

        <path d="M642 404.500H1260" />
        <path d="M578 338.500L642.500 404.500H513z" fill="#103cb3" stroke="none" />
        <circle cx="578.500" cy="404" r="45.500" fill="#f9f9fb" stroke="#3d57b8" />
        <path d="M513 404.500H642" stroke="#26418f" />

        <path d="M1234.500 177V700" />
        <path d="M726.500 505V700M733.500 700V513.500H1198M1198.500 505V546M1198.500 575V700" />
        {range(7).map((i) => <path key={i} d={`M${931.5 + i * 38.1} 513V651`} />)}
        <path d="M931.500 651V700M931 651.500H1198M931 657.500H1198M943 658L975 698M863.500 700V582" />
        <path d="M931 665.500H1198" strokeDasharray="28 10" />
        <path d="M969.500 667V700M1008 667V700M1045.500 667V700M1083.500 667V700M1121.500 667V700M1160 667V700" />
        <path d="M718 582.500H856" stroke="#3d8b45" strokeDasharray="10 8" />
        <path d="M863 582.500H1198" stroke="#3c5c37" />

        <g fill="#0c0c0c" stroke="none" className="font-['Liberation_Sans',Arial,sans-serif]">
          <g fill="#1c3fae" fontSize="21" textAnchor="middle">
            <text x="578.500" y="389">2</text>
            <text x="578" y="427">A102</text>
          </g>
          <g fontSize="25">
            <text x="866" y="435">Banheiro 01</text>
            <text x="936" y="616">Escada</text>
            <text x="1161" y="570">Acima</text>
          </g>
          <g fontSize="21">
            <text x="900" y="458">4.50 m²</text>
            <text x="943" y="639">6.30 m²</text>
            <text x="1173" y="429">P3</text>
            <text x="1147" y="450">0.6 x 2.1</text>
            <text transform="translate(753 380) rotate(-90)">J3</text>
            <text transform="translate(772 423) rotate(-90)">0.61 x 0.61</text>
          </g>
        </g>
      </g>
    </svg>
  );
}

function NavBar() {
  return (
    <div className="absolute top-[27px] right-[1px] flex h-[117px] w-[35px] flex-col items-center justify-between rounded-[5px] border-2 border-[#bbb]/70 bg-[#dedede]/60 py-[2px]">
      <button aria-label="Fechar barra de navegação" className="self-end"><Svg w={9} h={9}><g stroke="#aaa"><circle cx="4" cy="4" r="3" /><path d="M3 3l2 2M5 3L3 5" /></g></Svg></button>
      <button aria-label="Roda de navegação 2D" className="flex items-center">
        <svg width="28" height="26" viewBox="0 0 28 26" fill="none" stroke="#999" aria-hidden="true">
          <circle cx="12" cy="11" r="9" fill="#ddd" fillOpacity=".5" strokeWidth="1.500" /><circle cx="12" cy="11" r="4.500" strokeWidth="1.500" />
          <text x="14" y="24" fontSize="10" fontWeight="bold" fill="#888" stroke="none" className="font-['Liberation_Sans',sans-serif]">2D</text>
        </svg>
      </button>
      <span className="opacity-50"><Caret /></span>
      <span className="h-px w-6 bg-[#bbb]" />
      <button aria-label="Zoom na região"><Svg w={18} h={18}><path d="M1 1h11v11H1z" fill="#a9c6a2" stroke="#9aa" /><circle cx="12" cy="11" r="3.500" fill="#eee" stroke="#999" /><path d="M14.500 13.500l3 3" stroke="#999" /></Svg></button>
      <span className="opacity-50"><Caret /></span>
      <button aria-label="Opções de navegação" className="self-end"><Svg w={9} h={9}><circle cx="4" cy="4" r="3" stroke="#aaa" /></Svg></button>
    </div>
  );
}

function RedX() {
  return <path d="M8 8l6 6M14 8l-6 6" stroke="#d3262b" strokeWidth="2.200" />;
}

function ViewControls() {
  return (
    <div className="flex h-[19px] shrink-0 items-center bg-[#ececec]">
      <button className="w-[76px] pl-[27px] text-left text-[11px] text-[#222]">1 : 50</button>
      <div className="grid grid-cols-[repeat(9,21px)]">
        <Cell label="Nível de detalhe"><Svg w={16} h={14}><path d="M.7 1.500h14.600v10.500H.7z" fill="#e6e6e6" /></Svg></Cell>
        <Cell label="Estilo visual"><Svg w={16} h={14}><path d="M1 6l4-4h10v6l-4 5H1zM1 6h10v7M11 6l4-4" fill="#eee" /></Svg></Cell>
        <Cell label="Caminho do sol desativado"><Svg w={16} h={16}><circle cx="7" cy="7" r="3.800" fill="#ffeaa5" stroke="#e3a72b" strokeWidth="1.600" /><path d="M7 0v2M1 2l2 2M0 7h2M2 12l1-1M13 2l-2 2" stroke="#e3a72b" /><RedX /></Svg></Cell>
        <Cell label="Sombras desativadas"><Svg w={16} h={16}><circle cx="7" cy="6" r="4.500" fill="#e6f1fa" stroke="#6ba0cd" strokeWidth="1.500" /><path d="M2 13h6" stroke="#6ba0cd" strokeWidth="2" /><RedX /></Svg></Cell>
        <Cell label="Não recortar vista"><Svg w={18} h={16}><path d="M5 1v11h8M1 5h11M1 10h4M12 2v4h4" stroke="#3f6e9f" strokeWidth="1.800" /><path d="M3 7h4M8 3h3" stroke="#8db4d8" strokeWidth="1.500" /><RedX /></Svg></Cell>
        <Cell label="Ocultar região de recorte"><Svg w={18} h={16}><path d="M5 3v10h5M1 9h4M6 4h5M7 8h3" stroke="#3f6e9f" strokeWidth="1.800" /><path d="M12.500 10c-4-6 4-9 4.500-4 0 2-2 2-2 4v3h-2z" fill="#eee" stroke="#5c8fc4" /></Svg></Cell>
        <Cell label="Ocultar/isolar temporário"><Svg w={17} h={14}><path d="M1 4c0 3 2 4 3.500 3.500M11 3c3-2 5-1 5 1.500 0 2-1 2-1.500 2.500" /><circle cx="6" cy="8.500" r="2.500" /><circle cx="11.500" cy="8" r="3" /></Svg></Cell>
        <Cell label="Revelar elementos ocultos"><Svg w={12} h={14}><circle cx="6" cy="5" r="3.500" fill="#e5effa" stroke="#4a80c4" /><path d="M4.500 10h3M5 12h2" stroke="#4a80c4" /></Svg></Cell>
        <Cell label="Restrições"><Svg w={15} h={15}><path d="M1 6l4-4h8v8l-4 4M1 6h9v8M1 6v7M4 6v8M7 6v8M5 2v4M9 2v4M1 9h12" stroke="#333" /><path d="M2 9h8" stroke="#b33" strokeWidth="1.500" /></Svg></Cell>
      </div>
      <ScrollArrow dir="left" />
      <div className="ml-auto" />
      <div className="h-[15px] w-[15px] border border-[#999] bg-linear-to-b from-[#f6f6f6] to-[#cfcfcf]" />
      <div className="flex w-[272px] justify-end pr-5"><ScrollArrow dir="right" /></div>
    </div>
  );
}

function Canvas() {
  return (
    <main className="ml-[7px] flex min-w-0 flex-1 flex-col border-l border-l-[#777]">
      <div className="flex min-h-0 flex-1">
        <div className="relative min-w-0 flex-1 overflow-hidden bg-[#f8f8fa]">
          <div className="absolute inset-0"><FloorPlan /></div>
          <div className="absolute top-[7px] right-[3px] flex gap-[6px]">
            <button aria-label="Minimizar vista"><Svg w={12} h={12}><path d="M1 6h10v3H1z" fill="#fff" /></Svg></button>
            <button aria-label="Restaurar vista"><Svg w={12} h={12}><path d="M4 3V1h7v7H9M1 3.500h8V11H1z" fill="#fff" /><path d="M4 6h2.500v2.500H4z" /></Svg></button>
            <button aria-label="Fechar vista"><Svg w={12} h={12}><path d="M1 1h3l2 3 2-3h3L8 6l3 5H8L6 8l-2 3H1l3-5z" fill="#fff" stroke="#333" strokeWidth="1.100" /></Svg></button>
          </div>
          <NavBar />
        </div>
        <div className="flex w-[19px] shrink-0 flex-col items-center bg-[#ececec] pr-[2px]">
          <ScrollArrow dir="up" />
          <div className="flex-1" />
          <div className="h-[15px] w-[15px] border border-[#999] bg-linear-to-r from-[#f6f6f6] to-[#cfcfcf]" />
          <div className="flex-1" />
          <ScrollArrow dir="down" />
        </div>
      </div>
      <ViewControls />
    </main>
  );
}

/* ---------- status bar ---------- */

function StatusBar() {
  return (
    <footer className="mb-[2px] flex h-[26px] shrink-0 items-center border-t border-t-[#888] bg-linear-to-b from-[#e6e6e6] to-[#c9c9c9] pl-[5px] text-[11px] text-[#222]">
      <p className="w-[345px] overflow-hidden whitespace-nowrap">Clique para selecionar, TAB para alternativas, CTRL adiciona, SHIF</p>
      <Tool label="Conjuntos de trabalho"><Svg><path d="M2 8l3-2 4 2v6l-3 2-4-2z" fill="#9fd0f3" stroke="#3873a8" /><path d="M7 3l4-1 3 2v5l-4 1" fill="#d5efcf" stroke="#3b8f3a" /><path d="M11 8c0 2 1 2 1 3v5h3v-5c1-1 1-2 1-3" fill="#eee" /></Svg></Tool>
      <div className="relative ml-1">
        <select aria-label="Conjunto de trabalho ativo" className="block h-5 w-[203px] appearance-none bg-[#f5f5f5]"><option></option></select>
        <svg width="7" height="4" viewBox="0 0 7 4" className="pointer-events-none absolute top-[9px] right-1" aria-hidden="true"><path d="M0 0h7L3.500 4z" fill="#999" /></svg>
      </div>
      <button className="ml-[6px] flex items-center gap-1">
        <Svg><path d="M6 2h10l-5 6v3l-3 5H5l3-5V8L6 6z" fill="#ccc" stroke="#999" /></Svg>
        :0
      </button>
      <span className="w-5" />
      <Tool label="Opções de projeto"><Svg><path d="M1.500 2.500h15v13h-15z" fill="#f0f0f0" /><path d="M1.500 3.500h15" strokeWidth="2.500" /><path d="M4 7v6M4 7h3M9 7h5M9 10h5M9 13h5" strokeWidth="1.500" /></Svg></Tool>
      <Tool label="Adicionar ao conjunto"><Svg><path d="M3 2h13v13H8l-6-4h6V8H3z" fill="#999" stroke="#aaa" /></Svg></Tool>
      <div className="relative ml-[5px]">
        <select aria-label="Opção de projeto ativa" className="block h-5 w-[154px] appearance-none bg-[#f5f5f5] px-[3px] text-[11px] text-[#999]"><option>Modelo principal</option></select>
        <svg width="7" height="4" viewBox="0 0 7 4" className="pointer-events-none absolute top-[9px] right-1" aria-hidden="true"><path d="M0 0h7L3.500 4z" fill="#999" /></svg>
      </div>
      <label className="relative ml-auto flex items-center gap-1">
        <input type="checkbox" defaultChecked className="peer h-[14px] w-[14px] appearance-none border border-[#444] bg-white" />
        <svg width="14" height="14" viewBox="0 0 14 14" className="pointer-events-none absolute left-0 hidden peer-checked:block" aria-hidden="true"><path d="M3 7l3 3.500L11.500 4" fill="none" stroke="#3b9a3e" strokeWidth="2" /></svg>
        Pressionar & Arrastar
      </label>
      <button aria-label="Filtro" className="mr-px ml-[26px]"><Svg w={9} h={14}><path d="M9 1H1l5 6v3M8 10v3" /></Svg></button>
    </footer>
  );
}

export default function App() {
  return (
    <div className="flex h-screen min-h-[480px] flex-col overflow-hidden bg-black pr-[14px] pl-[14px] font-['Open_Sans','Noto_Sans',sans-serif]">
      <div className="relative flex min-h-0 flex-1 flex-col border-r-2 border-l-2 border-r-[#999] border-l-[#999] bg-[#8a8a8a]">
        <div className="-ml-[2px] flex min-h-0 flex-1 flex-col">
          <Header />
          <Ribbon />
          <div className="flex h-8 shrink-0 items-center bg-[#dbdcd6] pl-[7px] text-[11px] text-[#222]">Modificar | Pisos</div>
          <div className="flex min-h-0 flex-1 border-t-2 border-t-[#8a8a8a] bg-[#e4e4e4] pl-1">
            <Properties />
            <Browser />
            <Canvas />
          </div>
          <StatusBar />
        </div>
        <div className="pointer-events-none absolute top-[90px] left-[902px]">
          <svg width="50" height="50" viewBox="0 0 50 50" aria-hidden="true">
            <circle cx="25.500" cy="25" r="24" fill="#b0b70a" />
            <path d="M27 26v17l4-4 3 7 3-1-3-7h5z" fill="#fff" stroke="#333" strokeWidth="1.200" />
          </svg>
        </div>
      </div>
    </div>
  );
}
